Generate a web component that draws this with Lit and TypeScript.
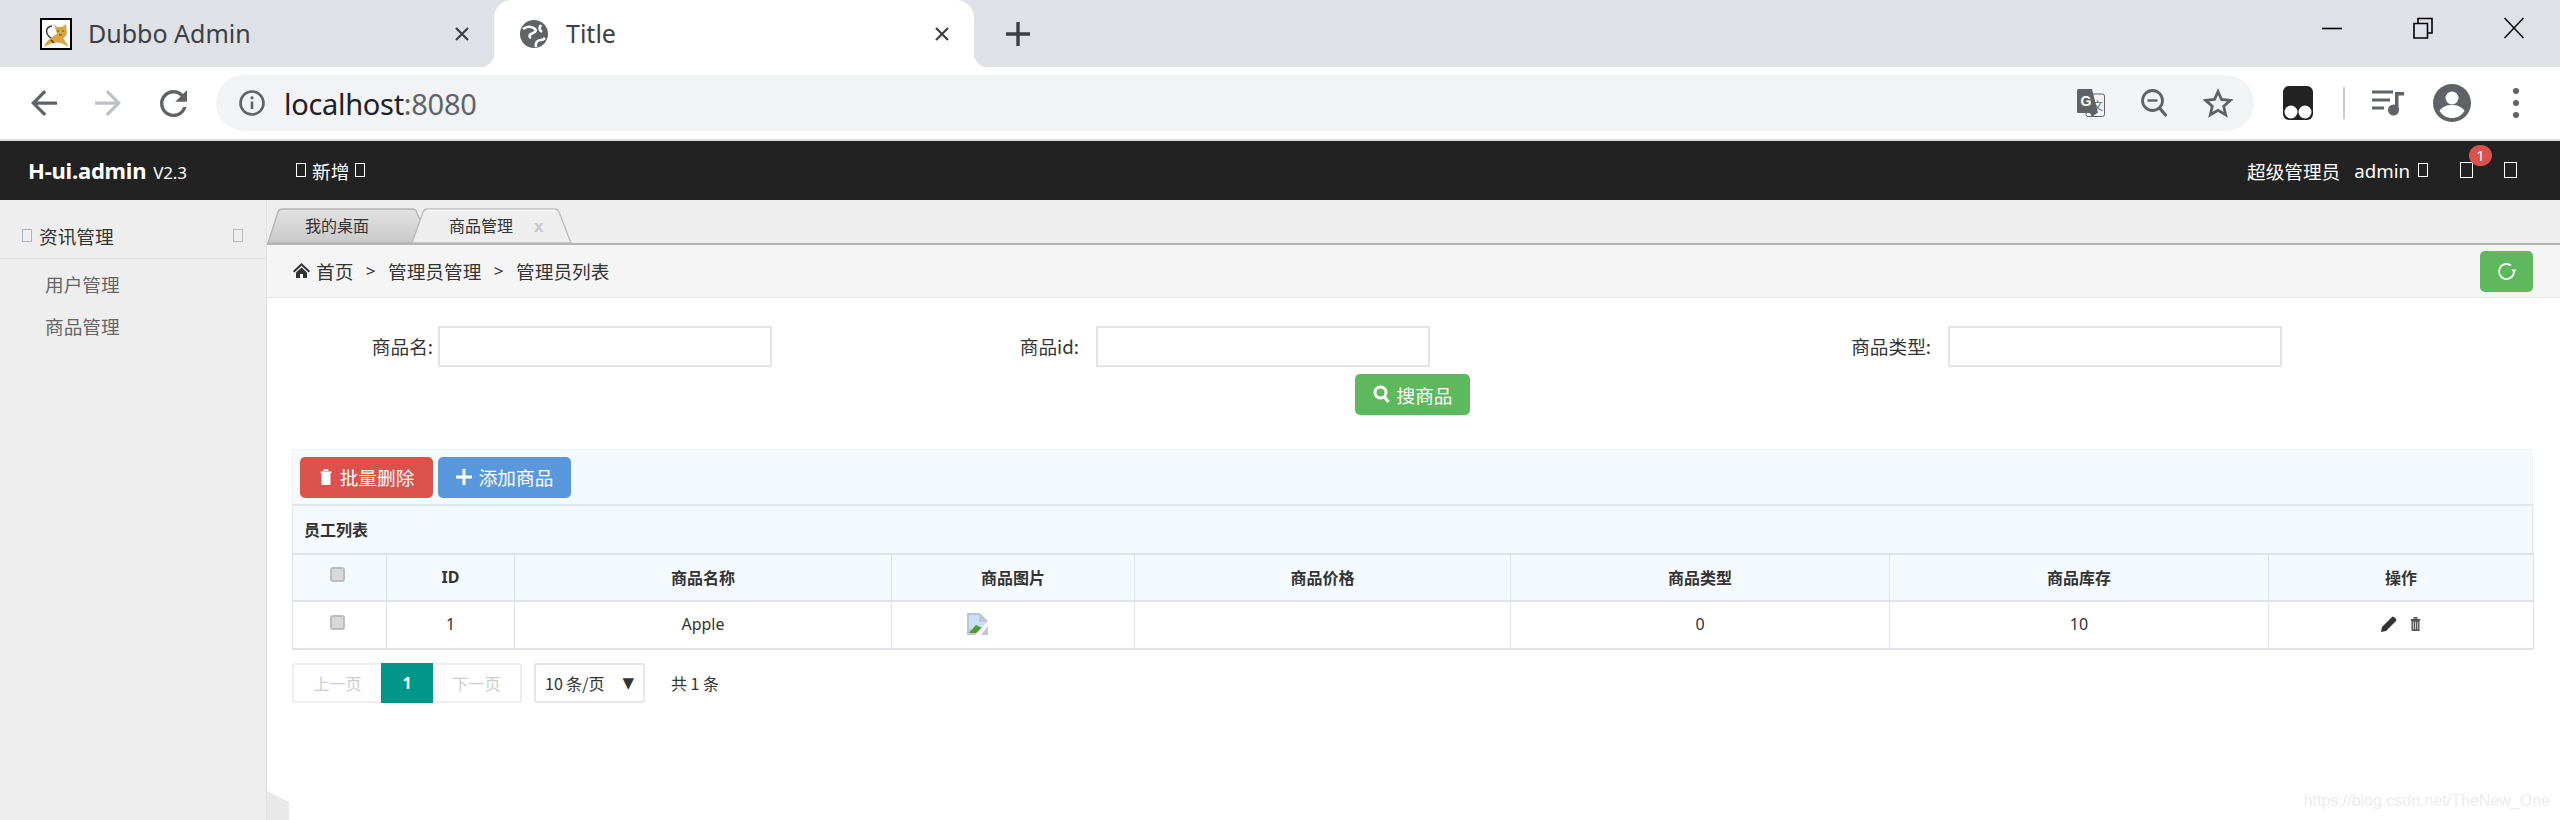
import { LitElement, html, css, svg } from "lit";
import { customElement } from "lit/decorators.js";

const TRASH = svg`<path d="M1.5 3.5h11v1.6h-1V16q0 1-1 1h-7q-1 0-1-1V5.1h-1z M5 1h4l.6 2H4.4z" fill="currentColor"/><path d="M4.6 6.5v8.5M7 6.5v8.5M9.4 6.5v8.5" stroke="#fff" stroke-width=".8" fill="none"/>`;

const COLS = ["c1", "c2", "c3", "c4", "c5", "c6", "c7", "c8"];
const HEAD = ["", "ID", "商品名称", "商品图片", "商品价格", "商品类型", "商品库存", "操作"];

@customElement("app-root")
export class AppRoot extends LitElement {
  static styles = css`
    :host { display: block; width: 2560px; height: 820px; overflow: hidden; position: relative; background: #fff; font-family: "Noto Sans CJK SC", "Noto Sans", sans-serif; color: #333; }
    * { box-sizing: border-box; }
    svg { display: block; flex: none; }
    .strip { height: 67px; background: #dee1e6; display: flex; align-items: center; font-family: "Noto Sans", "Noto Sans CJK SC", sans-serif; }
    .tab { height: 67px; display: flex; align-items: center; font-size: 25px; color: #3c4043; padding-right: 24px; }
    .tab1 { width: 494px; padding-left: 40px; }
    .tab2 { width: 480px; padding-left: 26px; background: #fff; border-radius: 18px 18px 0 0; position: relative; }
    .tab2::before, .tab2::after { content: ""; position: absolute; bottom: 0; width: 14px; height: 14px; }
    .tab2::before { left: -14px; background: radial-gradient(circle at 0 0, transparent 14px, #fff 14.5px); }
    .tab2::after { right: -14px; background: radial-gradient(circle at 100% 0, transparent 14px, #fff 14.5px); }
    .tab-label { margin-left: 16px; flex: 1; line-height: 32px; padding-bottom: 2px; }
    .tab2 .tab-label { margin-left: 18px; color: #3c4043; }
    .plus { margin-left: 32px; }
    .winctl { margin-left: auto; display: flex; align-items: center; gap: 71px; padding-right: 36px; height: 56px; align-self: flex-start; }
    .toolbar { height: 72px; background: #fff; display: flex; align-items: center; padding-left: 31px; border: 0; }
    .ml38 { margin-left: 38px; }
    .ml39 { margin-left: 39px; }
    .omni { width: 2038px; height: 56px; margin-left: 29px; border-radius: 28px; background: #f1f3f4; display: flex; align-items: center; padding: 0 21px 0 23px; }
    .url { margin-left: 19px; font-size: 29px; color: #202124; font-family: "Noto Sans", sans-serif; letter-spacing: -.3px; }
    .url span { color: #5f6368; }
    .omni-r { margin-left: auto; display: flex; align-items: center; gap: 36px; }
    .tamper { margin-left: 29px; }
    .sep { width: 2px; height: 32px; background: #ccc; margin-left: 30px; }
    .media { margin-left: 27px; }
    .avatar { margin-left: 29px; }
    .dots { margin-left: 42px; }
    .hairline { height: 2px; background: #dadce0; }

    .topbar { height: 59px; background: #222; color: #fff; display: flex; align-items: center; font-size: 18.67px; padding: 0 43px 1px 28px; }
    .brand { font-family: "Noto Sans", sans-serif; font-weight: 700; font-size: 22px; letter-spacing: -.2px; width: 268px; display: flex; align-items: baseline; }
    .brand small { font-weight: 400; font-size: 17px; margin-left: 7px; }
    .tofu { display: inline-block; width: 10px; height: 14px; border: 1px solid currentColor; flex: none; }
    .new { display: flex; align-items: center; gap: 6px; }
    .top-r { margin-left: auto; display: flex; align-items: center; }
    .admin { margin-left: 14px; font-family: "Noto Sans", sans-serif; font-size: 18.67px; }
    .top-r .t1 { margin-left: 8px; }
    .top-r .t2 { margin-left: 32px; width: 13px; height: 16px; position: relative; }
    .top-r .t3 { margin-left: 31px; width: 13px; height: 16px; }
    .badge { position: absolute; left: 8px; top: -18px; width: 23px; height: 21px; border-radius: 50%; background: #dd514c; color: #fff; font-size: 15px; line-height: 21px; text-align: center; font-family: "Noto Sans", sans-serif; }

    .body { display: flex; height: 620px; }
    .side { width: 267px; background: #eee; border-right: 1px solid #e0e0e0; flex: none; }
    .side-h { height: 59px; border-bottom: 1px solid #e2e2e2; display: flex; align-items: center; padding: 12px 23px 0 22px; font-size: 18.67px; color: #333; gap: 7px; }
    .side-h .tofu { color: #a9b4c4; height: 13px; }
    .side-h .tofu:last-child { margin-left: auto; color: #bbb; }
    .side a { display: block; height: 42px; line-height: 42px; padding-left: 45px; font-size: 18.67px; color: #666; }
    .side-items { padding-top: 4px; }

    .main { flex: 1; min-width: 0; }
    .tabs { height: 45px; background: #eee; border-bottom: 2px solid #b4b4b4; display: flex; align-items: flex-end; }
    .ht { position: relative; height: 35px; font-size: 16px; line-height: 34px; flex: none; }
    .ht svg { position: absolute; left: 0; top: 0; }
    .ht span { position: relative; }
    .ht1 { width: 153px; padding-left: 38px; color: #333; }
    .ht2 { width: 160px; margin-left: -8px; padding-left: 37px; color: #333; }
    .ht2 b { position: relative; font-weight: 700; color: #c3c6c9; margin-left: 21px; font-family: "Liberation Sans", sans-serif; font-size: 17px; }
    .crumb { height: 53px; background: #f5f5f5; border-bottom: 1px solid #e3e3e3; display: flex; align-items: center; padding: 0 27px 2px 26px; font-size: 18.67px; color: #333; }
    .crumb .gt { margin: 0 12.5px; font-family: "Noto Sans", sans-serif; font-size: 17px; }
    .crumb .home { margin-right: 6px; }
    .refresh { margin-left: auto; width: 53px; height: 41px; border-radius: 5px; background: #5eb95e; display: flex; align-items: center; justify-content: center; margin-bottom: -2px; }

    .content { padding: 28px 27px 0 25px; }
    .form { display: grid; grid-template-columns: 480px 658px 852px; }
    .field { display: flex; justify-content: flex-end; align-items: center; font-size: 18.67px; color: #333; gap: 17px; }
    .field.near { gap: 5px; }
    .field label { margin-bottom: 3px; }
    .inp { width: 334px; height: 41px; border: 2px solid #e4e4e4; background: #fff; }
    .btn { height: 41px; border-radius: 5px; color: #fff; font-size: 18.67px; display: flex; align-items: center; justify-content: center; gap: 7px; width: 133px; padding-bottom: 1px; }
    .search { background: #5eb95e; width: 115px; margin: 7px 0 0 1063px; }
    .ops { margin-top: 34px; height: 57px; background: #f5fafe; border: 1px solid #eef1f5; border-bottom: 2px solid #e0e3e7; display: flex; align-items: center; gap: 5px; padding-left: 7px; }
    .del { background: #dd514c; }
    .add { background: #5a98de; }
    .cap { height: 47px; background: #f5fafe; border: 1px solid #dfe3e8; border-width: 0 1px; padding: 0 0 2px 11px; display: flex; align-items: center; font-size: 16px; font-weight: 700; color: #333; }
    table { width: 100%; table-layout: fixed; border-collapse: collapse; font-size: 16px; }
    th, td { border: 1px solid #dfe3e8; text-align: center; height: 47px; padding: 0 0 2px; color: #333; }
    thead tr { background: #f5fafe; }
    th { font-weight: 700; border-width: 2px 1px; }
    tbody td { height: 48px; border-bottom-width: 2px; }
    .c1 { width: 94px; } .c2 { width: 128px; } .c3 { width: 377px; } .c4 { width: 243px; }
    .c5 { width: 376px; } .c6 { width: 379px; } .c7 { width: 379px; } .c8 { width: 265px; }
    .idc { font-family: "Noto Sans", sans-serif; }
    .cb { display: block; width: 15px; height: 15px; margin: -4px auto 0 auto; border-radius: 3px; background: #d8d8d8; border: 2px solid #bdbdbd; position: relative; left: -2px; }
    .broken { padding-left: 74px; }
    .acts { display: flex; justify-content: center; align-items: center; gap: 12px; }
    .pager { margin-top: 13px; display: flex; align-items: center; font-size: 16px; }
    .pg { height: 40px; display: flex; align-items: center; justify-content: center; border: 2px solid #eee; color: #ccc; width: 89px; }
    .pg.prev { border-right: 0; width: 89px; border-radius: 3px 0 0 3px; }
    .pg.cur { width: 52px; border: 0; background: #009688; color: #fff; font-weight: 700; font-family: "Noto Sans", sans-serif; }
    .pg.next { border-left: 0; border-radius: 0 3px 3px 0; }
    .sel { margin-left: 12px; width: 111px; height: 40px; border: 2px solid #e6e6e6; border-radius: 3px; display: flex; align-items: center; padding-left: 9px; color: #333; }
    .sel i { font-style: normal; margin-left: auto; margin-right: 9px; font-size: 15px; font-family: "DejaVu Sans", sans-serif; }
    .total { margin-left: 26px; color: #333; }
    .corner { position: absolute; left: 267px; bottom: 0; }
    .mark { position: absolute; right: 10px; bottom: 10px; font-family: "Liberation Sans", sans-serif; font-size: 16px; color: #ececec; }
  `;

  render() {
    return html`
      <div class="strip">
        <div class="tab tab1">
          <svg width="32" height="32" viewBox="0 0 32 32"><rect x="1" y="1" width="30" height="30" fill="#fff" stroke="#000" stroke-width="2"/><path d="M14 6l3 3h5l4-3 1 9q-1 4-4 5l6 9-8-4q-5-1-9 0l-8 4q2-6 8-10 3-2 5-3z" fill="#d9a441"/><path d="M11 20C5 16 5 9 12 8M11 22l3 3" stroke="#333" stroke-width="1.4" fill="none"/><path d="M17 13h2M22 13h2M19 17h3" stroke="#6b4a10" stroke-width="1.2"/></svg>
          <span class="tab-label">Dubbo Admin</span>
          <svg width="16" height="16" viewBox="0 0 16 16"><path d="M2 2l12 12M14 2L2 14" stroke="#3c4043" stroke-width="2.2"/></svg>
        </div>
        <div class="tab tab2">
          <svg width="28" height="28" viewBox="0 0 28 28"><circle cx="14" cy="14" r="14" fill="#5f6368"/><path d="M3 9c4-3 9-3 12 0 2 2-1 4-4 5-2 1-2 3 0 4M21 5c-2 3-2 5 1 7M16 27c-1-4 1-7 5-7 2 0 3-1 4-2" stroke="#fff" stroke-width="2.6" fill="none"/></svg>
          <span class="tab-label">Title</span>
          <svg width="16" height="16" viewBox="0 0 16 16"><path d="M2 2l12 12M14 2L2 14" stroke="#3c4043" stroke-width="2.2"/></svg>
        </div>
        <svg class="plus" width="24" height="24" viewBox="0 0 24 24"><path d="M12 0v24M0 12h24" stroke="#3c4043" stroke-width="3.4"/></svg>
        <div class="winctl">
          <svg width="20" height="20" viewBox="0 0 20 20"><path d="M0 10.5h20" stroke="#000" stroke-width="1.6"/></svg>
          <svg width="20" height="22" viewBox="0 0 20 22"><path d="M1 6.5h13.5V21H1zM5 6V1.5h14V16h-4.5" stroke="#000" stroke-width="1.6" fill="none"/></svg>
          <svg width="20" height="22" viewBox="0 0 20 22"><path d="M.5 1l19 20M19.5 1L.5 21" stroke="#000" stroke-width="1.5"/></svg>
        </div>
      </div>
      <div class="toolbar">
        <svg width="26" height="26" viewBox="4 4 16 16"><path fill="#5f6368" d="M20 11H7.83l5.59-5.59L12 4l-8 8 8 8 1.41-1.41L7.83 13H20v-2z"/></svg>
        <svg class="ml38" width="26" height="26" viewBox="4 4 16 16"><path fill="#bdc1c6" d="M4 11h12.17l-5.59-5.59L12 4l8 8-8 8-1.41-1.41L16.17 13H4v-2z"/></svg>
        <svg class="ml39" width="27" height="27" viewBox="4 4 16 16"><path fill="#5f6368" d="M17.65 6.35A7.958 7.958 0 0 0 12 4c-4.42 0-7.99 3.58-7.99 8s3.57 8 7.99 8c3.73 0 6.84-2.55 7.73-6h-2.08A5.99 5.99 0 0 1 12 18c-3.31 0-6-2.69-6-6s2.69-6 6-6c1.66 0 3.14.69 4.22 1.78L13 11h7V4l-2.35 2.35z"/></svg>
        <div class="omni">
          <svg width="26" height="26" viewBox="0 0 26 26"><circle cx="13" cy="13" r="11.5" fill="none" stroke="#5f6368" stroke-width="2.6"/><path d="M13 11.5V19" stroke="#5f6368" stroke-width="2.6"/><circle cx="13" cy="7.8" r="1.6" fill="#5f6368"/></svg>
          <span class="url">localhost<span>:8080</span></span>
          <div class="omni-r">
            <svg width="28" height="28" viewBox="0 0 28 28"><rect x="9" y="5" width="18.5" height="22.5" rx="2" fill="#f1f3f4" stroke="#5f6368"/><path d="M1.5 0H15l6 24H1.5Q0 24 0 22.5V1.5Q0 0 1.5 0z" fill="#5f6368"/><path d="M13 24l2 4 5-4z" fill="#5f6368"/><text x="3.5" y="17" font-family="Liberation Sans" font-weight="700" font-size="14" fill="#fff">G</text><text x="15" y="21" font-family="Noto Sans CJK SC" font-size="11" fill="#5f6368">文</text></svg>
            <svg width="26" height="28" viewBox="0 0 26 28"><circle cx="11.5" cy="11.5" r="10" fill="none" stroke="#5f6368" stroke-width="2.8"/><path d="M6.5 11.5h10" stroke="#5f6368" stroke-width="2.4"/><path d="M18.5 19l7 8" stroke="#5f6368" stroke-width="3.2"/></svg>
            <svg width="30" height="30" viewBox="0 0 30 30"><path d="M15 3.5l3.5 8 8.8.9-6.6 5.8 2 8.6-7.7-4.5-7.7 4.5 2-8.6-6.6-5.8 8.8-.9z" fill="none" stroke="#5f6368" stroke-width="2.8"/></svg>
          </div>
        </div>
        <svg class="tamper" width="30" height="34" viewBox="0 0 30 34"><rect width="30" height="34" rx="6" fill="#222"/><circle cx="8" cy="26" r="6.5" fill="#fff"/><circle cx="22" cy="26" r="6.5" fill="#fff"/></svg>
        <div class="sep"></div>
        <svg class="media" width="32" height="26" viewBox="0 0 32 26"><path d="M0 2h21M0 10h18M0 18h12" stroke="#5f6368" stroke-width="3"/><path d="M23 2h9v3.5h-5.5V20h-3.5z" fill="#5f6368"/><circle cx="21.5" cy="20" r="5.5" fill="#5f6368"/></svg>
        <svg class="avatar" width="38" height="38" viewBox="0 0 38 38"><circle cx="19" cy="19" r="19" fill="#5f6368"/><circle cx="19" cy="14" r="6.5" fill="#fff"/><path d="M6.5 27c3-5 8-6 12.5-6s9.500 1 12.500 6c-3 4.500-7.500 7-12.500 7S9.500 31.500 6.500 27z" fill="#fff"/></svg>
        <svg class="dots" width="6" height="30" viewBox="0 0 6 30"><circle cx="3" cy="3" r="3" fill="#5f6368"/><circle cx="3" cy="15" r="3" fill="#5f6368"/><circle cx="3" cy="27" r="3" fill="#5f6368"/></svg>
      </div>
      <div class="hairline"></div>
      <div class="topbar">
        <div class="brand">H-ui.admin<small>V2.3</small></div>
        <div class="new"><span class="tofu"></span><span>新增</span><span class="tofu"></span></div>
        <div class="top-r">
          <span>超级管理员</span><span class="admin">admin</span>
          <span class="tofu t1"></span>
          <span class="tofu t2"><span class="badge">1</span></span>
          <span class="tofu t3"></span>
        </div>
      </div>
      <div class="body">
        <aside class="side">
          <div class="side-h"><span class="tofu"></span><span>资讯管理</span><span class="tofu"></span></div>
          <div class="side-items"><a>用户管理</a><a>商品管理</a></div>
        </aside>
        <div class="main">
          <div class="tabs">
            <div class="ht ht1">
              <svg width="153" height="35" viewBox="0 0 153 35"><defs><linearGradient id="g1" x1="0" y1="0" x2="0" y2="1"><stop offset="0" stop-color="#e2e2e2"/><stop offset="1" stop-color="#c9c9c9"/></linearGradient></defs><path d="M1 35L11 4Q12 1 15 1H145Q149 1 150 5L153 12V35z" fill="url(#g1)" stroke="#b4b4b4" stroke-width="1.4"/></svg>
              <span>我的桌面</span>
            </div>
            <div class="ht ht2">
              <svg width="160" height="35" viewBox="0 0 160 35"><path d="M0 35L11 4Q12 1 15 1H143Q146 1 147 4L159 35z" fill="#eee" stroke="#bdbdbd" stroke-width="1.4"/><path d="M15 2.500H143" stroke="#fff" stroke-width="1.500"/></svg>
              <span>商品管理</span><b>x</b>
            </div>
          </div>
          <div class="crumb">
            <svg class="home" width="17" height="17" viewBox="0 0 17 17"><path d="M8.500 1L17 9l-1.300 1.400L8.500 3.700 1.300 10.400 0 9z" fill="#333"/><path d="M3 10.500L8.500 5.500l5.500 5V16h-4v-4H7v4H3z" fill="#333"/></svg>
            <span>首页</span><span class="gt">&gt;</span><span>管理员管理</span><span class="gt">&gt;</span><span>管理员列表</span>
            <div class="refresh"><svg width="22" height="22" viewBox="0 0 22 22"><path d="M15 5.500A7.500 7.500 0 1 0 18 12" fill="none" stroke="#fff" stroke-width="1.800"/><path d="M15.500 9.500h5l-2.500 3.500z" fill="#fff"/></svg></div>
          </div>
          <div class="content">
            <div class="form">
              <div class="field near"><label>商品名:</label><div class="inp"></div></div>
              <div class="field"><label>商品id:</label><div class="inp"></div></div>
              <div class="field"><label>商品类型:</label><div class="inp"></div></div>
            </div>
            <div class="btn search">
              <svg width="17" height="18" viewBox="0 0 17 18"><circle cx="7.500" cy="7.500" r="5.500" fill="none" stroke="#fff" stroke-width="3"/><path d="M11.500 12l4 5" stroke="#fff" stroke-width="3"/></svg>
              <span>搜商品</span>
            </div>
            <div class="ops">
              <div class="btn del"><svg width="14" height="18" viewBox="0 0 14 18" style="color:#fff">${TRASH}</svg><span>批量删除</span></div>
              <div class="btn add"><svg width="16" height="16" viewBox="0 0 16 16"><path d="M8 0v16M0 8h16" stroke="#fff" stroke-width="3"/></svg><span>添加商品</span></div>
            </div>
            <div class="cap">员工列表</div>
            <table>
              <colgroup>${COLS.map((c) => html`<col class=${c} />`)}</colgroup>
              <thead><tr>
                ${HEAD.map((h, i) => html`<th class=${i === 1 ? "idc" : ""}>${i === 0 ? html`<span class="cb"></span>` : h}</th>`)}
              </tr></thead>
              <tbody><tr>
                <td><span class="cb"></span></td>
                <td class="idc">1</td>
                <td class="idc">Apple</td>
                <td class="broken">
                  <svg width="22" height="22" viewBox="0 0 22 22"><path d="M1 0H14L22 8V22H1z" fill="#c2c7cf"/><path d="M3 2H13V9H20V16H3z" fill="#c9defa"/><path d="M3 20L10 12l6 3-6 5z" fill="#4c9c2e"/><path d="M9 22L22 8v5L15 22z" fill="#fff"/></svg>
                </td>
                <td></td>
                <td class="idc">0</td>
                <td class="idc">10</td>
                <td><div class="acts">
                  <svg width="16" height="16" viewBox="0 0 16 16"><path d="M0 16l1-5L11 1q1-1 2 0l2 2q1 1 0 2L5 15z" fill="#333"/></svg>
                  <svg width="13" height="16" viewBox="0 0 14 18" style="color:#555">${TRASH}</svg>
                </div></td>
              </tr></tbody>
            </table>
            <div class="pager">
              <div class="pg prev">上一页</div><div class="pg cur">1</div><div class="pg next">下一页</div>
              <div class="sel"><span>10 条/页</span><i>▼</i></div>
              <div class="total">共 1 条</div>
            </div>
          </div>
        </div>
      </div>
      <svg class="corner" width="22" height="29" viewBox="0 0 22 29"><path d="M0 0L22 11V29H0z" fill="#e9e9e9"/></svg>
      <div class="mark">https://blog.csdn.net/TheNew_One</div>
    `;
  }
}
